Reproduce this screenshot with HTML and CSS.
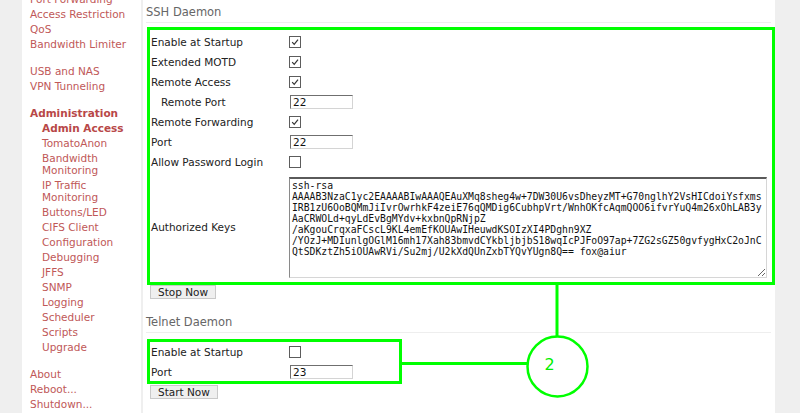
FILE: index.html
```
<!DOCTYPE html>
<html>
<head>
<meta charset="utf-8">
<link rel="stylesheet" href="styles.css">
</head>
<body>
<div class="page">
  <nav class="sidebar">
    <div class="group">
      <a>Port Forwarding</a>
      <a>Access Restriction</a>
      <a>QoS</a>
      <a>Bandwidth Limiter</a>
    </div>
    <div class="group">
      <a>USB and NAS</a>
      <a>VPN Tunneling</a>
    </div>
    <div class="group">
      <a class="head">Administration</a>
      <div class="sub">
        <a class="active">Admin Access</a>
        <a>TomatoAnon</a>
        <a>Bandwidth Monitoring</a>
        <a>IP Traffic Monitoring</a>
        <a>Buttons/LED</a>
        <a>CIFS Client</a>
        <a>Configuration</a>
        <a>Debugging</a>
        <a>JFFS</a>
        <a>SNMP</a>
        <a>Logging</a>
        <a>Scheduler</a>
        <a>Scripts</a>
        <a>Upgrade</a>
      </div>
    </div>
    <div class="group">
      <a>About</a>
      <a>Reboot...</a>
      <a>Shutdown...</a>
    </div>
  </nav>

  <main class="content">
    <section class="section">
      <h2 class="section-title">SSH Daemon</h2>
      <table class="fields">
        <tr><td class="title">Enable at Startup</td><td><span class="cb"><svg viewBox="0 0 10 10"><polyline points="2.2,5.2 4.2,7.4 8,2.6"/></svg></span></td></tr>
        <tr><td class="title">Extended MOTD</td><td><span class="cb"><svg viewBox="0 0 10 10"><polyline points="2.2,5.2 4.2,7.4 8,2.6"/></svg></span></td></tr>
        <tr><td class="title">Remote Access</td><td><span class="cb"><svg viewBox="0 0 10 10"><polyline points="2.2,5.2 4.2,7.4 8,2.6"/></svg></span></td></tr>
        <tr><td class="title indent">Remote Port</td><td><input class="num" type="text" value="22"></td></tr>
        <tr><td class="title">Remote Forwarding</td><td><span class="cb"><svg viewBox="0 0 10 10"><polyline points="2.2,5.2 4.2,7.4 8,2.6"/></svg></span></td></tr>
        <tr><td class="title">Port</td><td><input class="num" type="text" value="22"></td></tr>
        <tr><td class="title">Allow Password Login</td><td><span class="cb"></span></td></tr>
        <tr class="keys"><td class="title">Authorized Keys</td><td><textarea class="keybox" spellcheck="false">ssh-rsa
AAAAB3NzaC1yc2EAAAABIwAAAQEAuXMq8sheg4w+7DW30U6vsDheyzMT+G70nglhY2VsHICdoiYsfxms
IRB1zU6OoBQMmJiIvrOwrhkF4zeiE76qQMDig6CubhpVrt/WnhOKfcAqmQOO6ifvrYuQ4m26xOhLAB3y
AaCRWOLd+qyLdEvBgMYdv+kxbnQpRNjpZ
/aKgouCrqxaFCscL9KL4emEfKOUAwIHeuwdKSOIzXI4PDghn9XZ
/YOzJ+MDIunlgOGlM16mh17Xah83bmvdCYkbljbjbS18wqIcPJFoO97ap+7ZG2sGZ50gvfygHxC2oJnC
QtSDKztZh5iOUAwRVi/Su2mj/U2kXdQUnZxbTYQvYUgn8Q== fox@aiur</textarea></td></tr>
      </table>
      <button class="btn">Stop Now</button>
    </section>

    <section class="section">
      <h2 class="section-title">Telnet Daemon</h2>
      <table class="fields">
        <tr><td class="title">Enable at Startup</td><td><span class="cb"></span></td></tr>
        <tr><td class="title">Port</td><td><input class="num" type="text" value="23"></td></tr>
      </table>
      <button class="btn">Start Now</button>
    </section>
  </main>

  <svg class="annot" width="800" height="413" viewBox="0 0 800 413">
    <rect x="148.5" y="28.5" width="625" height="255"/>
    <rect x="148.5" y="340.5" width="252" height="42"/>
    <line x1="557" y1="285" x2="557" y2="336"/>
    <line x1="402" y1="363.5" x2="527" y2="363.5"/>
    <circle cx="557.5" cy="366.5" r="30"/>
    <text x="549.5" y="369.5">2</text>
  </svg>
</div>
</body>
</html>
```

FILE: styles.css
```
* { box-sizing: border-box; }

html, body {
  margin: 0;
  padding: 0;
  background: #efefef;
  font-family: "DejaVu Sans", Verdana, sans-serif;
  font-size: 10.5px;
  color: #222;
}

.page {
  position: relative;
  width: 800px;
  height: 413px;
  overflow: hidden;
  display: flex;
  align-items: stretch;
  padding-left: 22px;
}

/* ---------- sidebar ---------- */
.sidebar {
  width: 119px;
  flex: none;
  background: #fff;
  padding: 0 4px 0 8px;
}

.sidebar .group {
  margin-bottom: 12px;
}

.sidebar .group:first-child {
  margin-top: -9px;
}

.sidebar a {
  display: block;
  color: #c05858;
  line-height: 12px;
  padding: 1.5px 0;
  text-decoration: none;
}

.sidebar a.head,
.sidebar a.active {
  font-weight: bold;
  color: #b84848;
}

.sidebar .sub {
  padding-left: 12px;
}

/* ---------- content ---------- */
.content {
  width: 632px;
  flex: none;
  margin-left: 2px;
  background: #fff;
  padding: 3px 4px 0 3px;
}

.section {
  margin-bottom: 14px;
}

.section-title {
  margin: 0;
  font-size: 11.5px;
  font-weight: normal;
  line-height: 19px;
  color: #666;
  border-bottom: 1px solid #eeeeee;
}

.fields {
  border-collapse: collapse;
  margin: 9px 0 0 1px;
  width: 624px;
}

.fields tr {
  height: 20px;
}

.fields td {
  padding: 0;
  vertical-align: middle;
}

.fields td.title {
  width: 142px;
  padding-left: 4px;
  white-space: nowrap;
}

.fields td.indent {
  padding-left: 14px;
}

.cb {
  display: block;
  width: 12px;
  height: 12px;
  border: 1px solid #5c5c5c;
  background: #fff;
}

.cb svg {
  display: block;
  width: 10px;
  height: 10px;
}

.cb polyline {
  fill: none;
  stroke: #333;
  stroke-width: 1.2;
}

.num {
  display: block;
  margin: 0 0 0 1px;
  width: 63px;
  height: 14px;
  padding: 0 2px;
  border: 1px solid;
  border-color: #6f6f6f #d4d4d4 #d4d4d4 #6f6f6f;
  font-family: "DejaVu Sans", sans-serif;
  font-size: 10.5px;
  line-height: 12px;
  color: #111;
  background: #fff;
  outline: none;
}

.keybox {
  display: block;
  margin: 5px 0 4px 0;
  width: 478px;
  height: 101px;
  padding: 1px 2px;
  border: 1px solid;
  border-top: 2px solid #5a5a5a;
  border-color: #5a5a5a #d6d6d6 #d6d6d6 #8a8a8a;
  font-family: "DejaVu Sans Mono", monospace;
  font-size: 9.75px;
  color: #111;
  white-space: pre;
  overflow: hidden;
  resize: both;
  background: #fff;
  outline: none;
}

.btn {
  display: block;
  margin: 3px 0 0 4px;
  height: 14px;
  padding: 0 7px;
  border: 1px solid #c9c9c9;
  background: #efefef;
  font-family: "DejaVu Sans", sans-serif;
  font-size: 10.5px;
  line-height: 12px;
  color: #222;
}

/* ---------- annotation overlay ---------- */
.annot {
  position: absolute;
  left: 0;
  top: 0;
  pointer-events: none;
}

.annot rect,
.annot line,
.annot circle {
  fill: none;
  stroke: #00ff00;
  stroke-width: 3;
}

.annot circle {
  stroke-width: 2.5;
}

.annot text {
  fill: #00ee00;
  font-family: "DejaVu Sans", sans-serif;
  font-size: 16px;
  text-anchor: middle;
}
```
